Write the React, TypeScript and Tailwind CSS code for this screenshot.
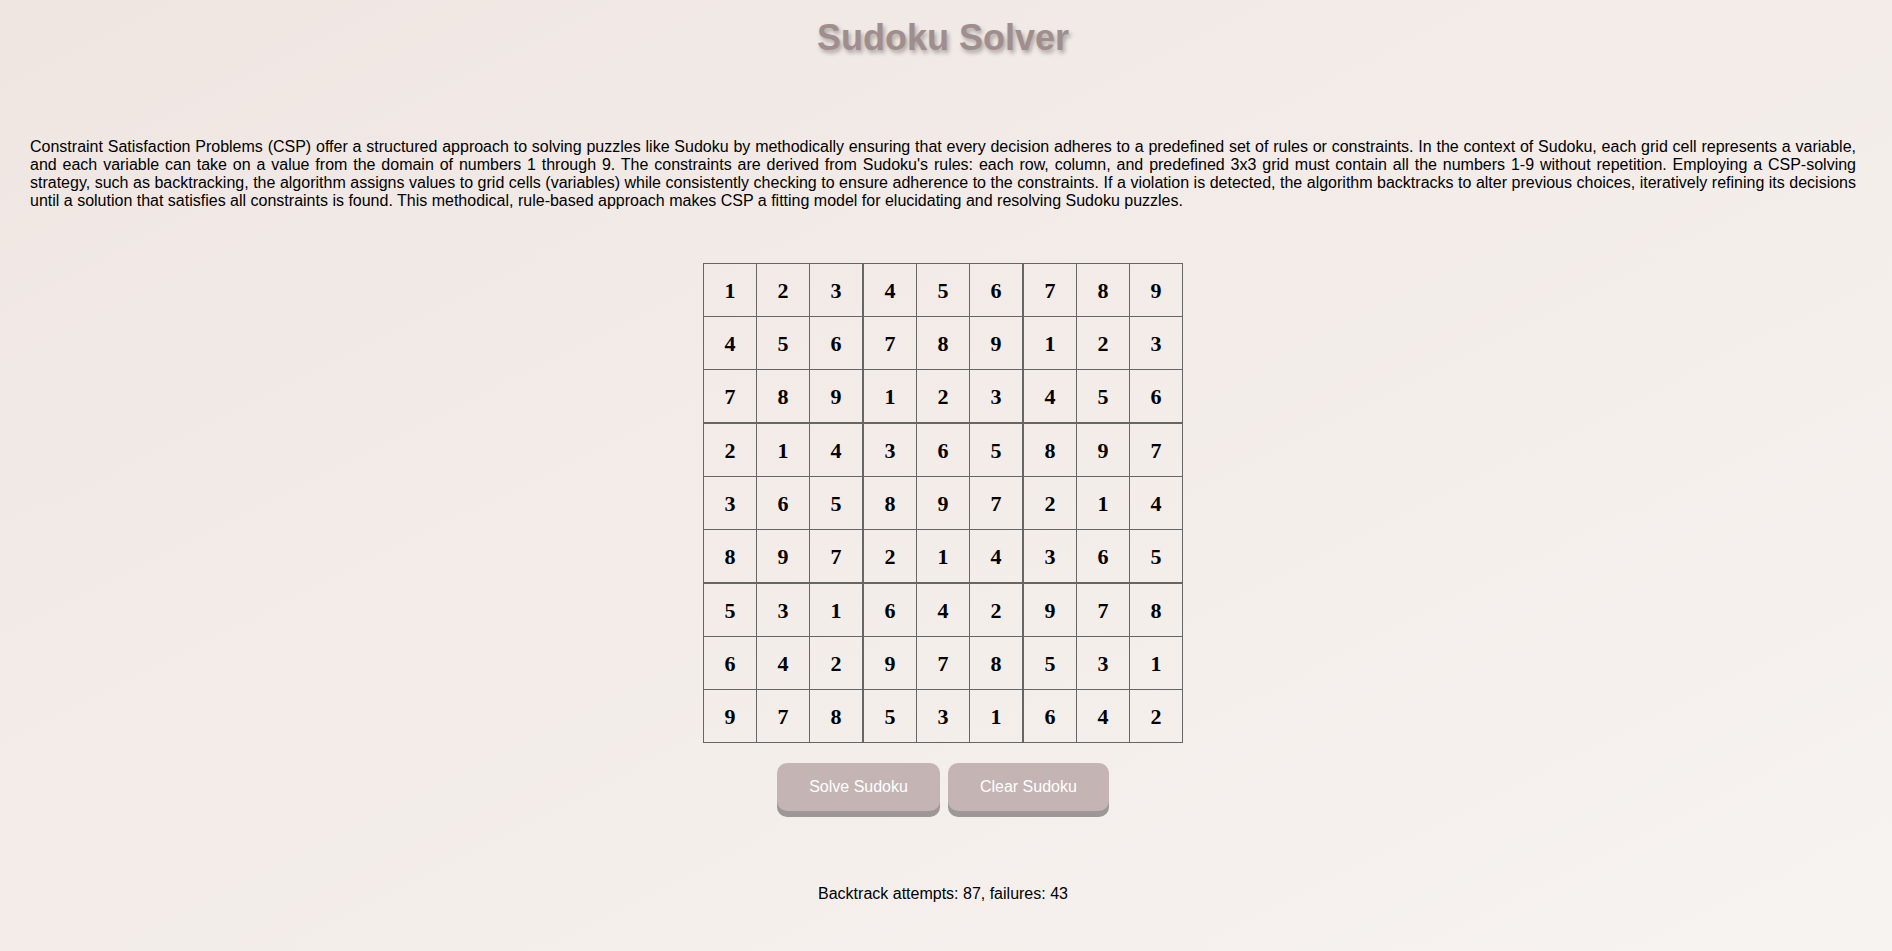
import * as React from 'react';

const board: number[][] = [
  [1, 2, 3, 4, 5, 6, 7, 8, 9],
  [4, 5, 6, 7, 8, 9, 1, 2, 3],
  [7, 8, 9, 1, 2, 3, 4, 5, 6],
  [2, 1, 4, 3, 6, 5, 8, 9, 7],
  [3, 6, 5, 8, 9, 7, 2, 1, 4],
  [8, 9, 7, 2, 1, 4, 3, 6, 5],
  [5, 3, 1, 6, 4, 2, 9, 7, 8],
  [6, 4, 2, 9, 7, 8, 5, 3, 1],
  [9, 7, 8, 5, 3, 1, 6, 4, 2],
];

const intro =
  "Constraint Satisfaction Problems (CSP) offer a structured approach to solving puzzles like Sudoku by methodically ensuring that every decision adheres to a predefined set of rules or constraints. In the context of Sudoku, each grid cell represents a variable, and each variable can take on a value from the domain of numbers 1 through 9. The constraints are derived from Sudoku's rules: each row, column, and predefined 3x3 grid must contain all the numbers 1-9 without repetition. Employing a CSP-solving strategy, such as backtracking, the algorithm assigns values to grid cells (variables) while consistently checking to ensure adherence to the constraints. If a violation is detected, the algorithm backtracks to alter previous choices, iteratively refining its decisions until a solution that satisfies all constraints is found. This methodical, rule-based approach makes CSP a fitting model for elucidating and resolving Sudoku puzzles.";

function Cell({ value, row, col }: { value: number; row: number; col: number }) {
  const thickRight = col === 2 || col === 5;
  const thickBottom = row === 2 || row === 5;
  return (
    <div
      className={
        'flex items-center justify-center border-[#666] font-bold text-[22px] text-black ' +
        (thickRight ? 'w-[54px] border-r-2 ' : 'w-[53px] border-r ') +
        (thickBottom ? 'h-[54px] border-b-2' : 'h-[53px] border-b')
      }
      style={{ fontFamily: '"Liberation Serif", "Times New Roman", serif' }}
    >
      {value}
    </div>
  );
}

export default function App() {
  return (
    <div
      className="min-h-screen bg-gradient-to-br from-[#efe6e2] to-[#f7f3f0] pl-[30px] pr-[36px] text-black"
      style={{ fontFamily: '"Liberation Sans", Arial, sans-serif' }}
    >
      <h1 className="pt-[17px] text-center text-[36px] leading-[41px] font-bold text-[#a08e8e] [text-shadow:2px_3px_4px_rgba(0,0,0,0.3)]">
        Sudoku Solver
      </h1>

      <p className="mt-[80px] text-justify text-[16px] leading-[18px]">{intro}</p>

      {/* Board */}
      <div className="mt-[53px] flex justify-center">
        <div className="flex flex-col border-l border-t border-[#666]">
          {board.map((r, ri) => (
            <div key={ri} className="flex">
              {r.map((v, ci) => (
                <Cell key={ci} value={v} row={ri} col={ci} />
              ))}
            </div>
          ))}
        </div>
      </div>

      <div className="mt-[20px] flex justify-center gap-2">
        <button className="rounded-[10px] bg-[#c4b5b4] px-8 py-[15px] text-[16px] leading-[18px] text-white shadow-[0_6px_0_#9c9898]">
          Solve Sudoku
        </button>
        <button className="rounded-[10px] bg-[#c4b5b4] px-8 py-[15px] text-[16px] leading-[18px] text-white shadow-[0_6px_0_#9c9898]">
          Clear Sudoku
        </button>
      </div>

      <p className="mt-[74px] text-center text-[16px] leading-[18px]">
        Backtrack attempts: 87, failures: 43
      </p>
    </div>
  );
}
